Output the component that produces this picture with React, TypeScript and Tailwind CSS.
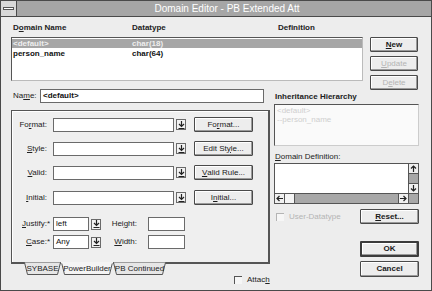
import React from "react";

const font = "font-['Liberation_Sans',Arial,sans-serif]";

function U({ children }: { children: React.ReactNode }) {
  return <span className="underline underline-offset-1">{children}</span>;
}

function Btn({
  children,
  className = "",
  disabled = false,
  isDefault = false,
}: {
  children: React.ReactNode;
  className?: string;
  disabled?: boolean;
  isDefault?: boolean;
}) {
  return (
    <div
      className={`h-[15px] flex items-center justify-center text-[8px] bg-[#ededed] rounded-[1px] ${
        isDefault ? "border-2 border-[#3c3c3c]" : "border border-[#4a4a4a]"
      } shadow-[inset_-1px_-1px_0_#9a9a9a,inset_1px_1px_0_#ffffff] ${
        disabled ? "text-[#b4b4b4]" : "text-[#1a1a1a]"
      } ${className}`}
    >
      {children}
    </div>
  );
}

function ArrowDown() {
  return (
    <svg width="7" height="8" viewBox="0 0 7 8">
      <path d="M3.5 0v4.5M1 3l2.5 2.5L6 3M0.5 7.5h6" stroke="#222" strokeWidth="1.2" fill="none" />
    </svg>
  );
}

function Combo({ width, value }: { width: string; value?: string }) {
  return (
    <div className={`flex items-center gap-[2px] ${width}`}>
      <div className="flex-1 h-[14px] bg-white border border-[#6a6a6a] text-[8px] leading-[12px] px-[2px] text-[#111]">
        {value}
      </div>
      <div className="w-[10px] h-[11px] bg-[#f2f2f2] border border-[#6a6a6a] flex items-center justify-center">
        <ArrowDown />
      </div>
    </div>
  );
}

function FieldRow({
  label,
  button,
}: {
  label: React.ReactNode;
  button: React.ReactNode;
}) {
  return (
    <div className="flex items-center h-[15px]">
      <div className="w-[29px] text-right text-[8px] text-[#222]">{label}</div>
      <div className="w-[6px]" />
      <Combo width="w-[133px]" />
      <Btn className="ml-[8px] w-[59px]">{button}</Btn>
    </div>
  );
}

function Tab({
  label,
  active = false,
  w,
}: {
  label: string;
  active?: boolean;
  w: number;
}) {
  return (
    <div className="relative h-[13px] flex items-center justify-center" style={{ width: w }}>
      <svg className="absolute inset-0" width={w} height={13} viewBox={`0 0 ${w} 13`}>
        <path
          d={`M0.5 0.5 L3.5 12.5 L${w - 3.5} 12.5 L${w - 0.5} 0.5`}
          fill={active ? "#f4f4f4" : "#e6e6e6"}
          stroke="#555"
          strokeWidth="1"
        />
        {active && <path d={`M0 0.5 H${w}`} stroke="#f4f4f4" strokeWidth="2" />}
      </svg>
      <span className="relative text-[8px] text-[#222] leading-none pt-[1px]">{label}</span>
    </div>
  );
}

function Checkbox({ label, disabled = false }: { label: React.ReactNode; disabled?: boolean }) {
  return (
    <div className={`flex items-center gap-[5px] text-[8px] ${disabled ? "text-[#b4b4b4]" : "text-[#222]"}`}>
      <div
        className={`w-[8px] h-[8px] bg-[#f6f6f6] border-l border-t ${
          disabled ? "border-[#b4b4b4]" : "border-[#555]"
        }`}
      />
      <span>{label}</span>
    </div>
  );
}

export default function App() {
  return (
    <div
      className={`${font} w-[432px] h-[291px] bg-[#ededed] border border-[#4a4a4a] flex flex-col overflow-hidden select-none`}
    >
      {/* title bar */}
      <div className="h-[16px] flex border-b border-[#4a4a4a]">
        <div className="w-[16px] bg-[#d8d8d8] border-r border-[#4a4a4a] flex items-center justify-center">
          <div className="w-[11px] h-[3px] bg-white border border-[#555]" />
        </div>
        <div className="flex-1 bg-[#a6a6a6] text-white text-[10px] flex items-center justify-center pl-[6px]">
          Domain Editor - PB Extended Att
        </div>
      </div>

      {/* domain list + actions */}
      <div className="flex pl-[10px] pt-[6px]">
        <div className="w-[352px]">
          <div className="grid grid-cols-[119px_146px_1fr] h-[10px] text-[8px] font-bold leading-[10px] text-[#222] pl-[2px]">
            <span>
              D<U>o</U>main Name
            </span>
            <span>Datatype</span>
            <span>Definition</span>
          </div>
          <div className="mt-[4px] h-[44px] bg-white border border-[#555] border-r-[#bbb] border-b-[#bbb] text-[8px] font-bold leading-[9px]">
            <div className="grid grid-cols-[119px_1fr] bg-[#a6a6a6] text-[#eeeeee] h-[9px] pl-[1px] mt-[1px]">
              <span>&lt;default&gt;</span>
              <span>char(18)</span>
            </div>
            <div className="grid grid-cols-[119px_1fr] text-[#111] h-[10px] pl-[1px] pt-[1px]">
              <span>person_name</span>
              <span>char(64)</span>
            </div>
          </div>
        </div>
        <div className="ml-[7px] pt-[14px] flex flex-col gap-[4px]">
          <Btn className="w-[48px] font-bold">
            <U>N</U>ew
          </Btn>
          <Btn className="w-[48px]" disabled>
            <U>U</U>pdate
          </Btn>
          <Btn className="w-[48px]" disabled>
            D<U>e</U>lete
          </Btn>
        </div>
      </div>

      {/* lower area */}
      <div className="flex flex-1 pl-[10px] -mt-[1px]">
        {/* left column */}
        <div className="w-[259px] flex flex-col">
          <div className="flex items-center h-[14px]">
            <span className="w-[29px] text-[8px] text-[#222] pl-[2px]">
              Na<U>m</U>e:
            </span>
            <div className="w-[224px] h-[14px] bg-white border border-[#6a6a6a] text-[8px] font-bold leading-[12px] px-[2px] text-[#111]">
              &lt;default&gt;
            </div>
          </div>

          <div className="mt-[7px] h-[154px] border border-[#555] border-r-2 border-b-2 bg-[#efefef] pl-[6px] pt-[6px] flex flex-col shadow-[inset_1px_1px_0_#ffffff]">
            <FieldRow
              label={
                <>
                  Fo<U>r</U>mat:
                </>
              }
              button={
                <>
                  Fo<U>r</U>mat...
                </>
              }
            />
            <div className="h-[9px]" />
            <FieldRow
              label={
                <>
                  <U>S</U>tyle:
                </>
              }
              button={
                <>
                  Edit St<U>y</U>le...
                </>
              }
            />
            <div className="h-[9px]" />
            <FieldRow
              label={
                <>
                  <U>V</U>alid:
                </>
              }
              button={
                <>
                  <U>V</U>alid Rule...
                </>
              }
            />
            <div className="h-[10px]" />
            <FieldRow
              label={
                <>
                  <U>I</U>nitial:
                </>
              }
              button={
                <>
                  I<U>n</U>itial...
                </>
              }
            />
            <div className="h-[12px]" />
            <div className="flex items-center h-[14px]">
              <div className="w-[32px] text-right text-[8px] text-[#222]">
                <U>J</U>ustify:*
              </div>
              <div className="w-[3px]" />
              <Combo width="w-[48px]" value="left" />
              <div className="w-[36px] text-right text-[8px] text-[#222]">
                Hei<U>g</U>ht:
              </div>
              <div className="ml-[11px] w-[37px] h-[14px] bg-white border border-[#6a6a6a]" />
            </div>
            <div className="h-[4px]" />
            <div className="flex items-center h-[14px]">
              <div className="w-[32px] text-right text-[8px] text-[#222]">
                <U>C</U>ase:*
              </div>
              <div className="w-[3px]" />
              <Combo width="w-[48px]" value="Any" />
              <div className="w-[36px] text-right text-[8px] text-[#222]">
                <U>W</U>idth:
              </div>
              <div className="ml-[11px] w-[37px] h-[14px] bg-white border border-[#6a6a6a]" />
            </div>
          </div>

          <div className="flex items-start -mt-[2px]">
            <div className="flex pl-[13px]">
              <Tab label="SYBASE" w={37} />
              <Tab label="PowerBuilder" w={52} active />
              <Tab label="PB Continued" w={53} />
            </div>
            <div className="ml-[68px] mt-[12px]">
              <Checkbox
                label={
                  <>
                    Attac<U>h</U>
                  </>
                }
              />
            </div>
          </div>
        </div>

        {/* right column */}
        <div className="ml-[4px] w-[145px] flex flex-col">
          <div className="text-[8px] font-bold text-[#222] h-[10px] leading-[10px] pl-[1px] mt-[3px]">
            Inheritance Hierarchy
          </div>
          <div className="mt-[2px] h-[42px] bg-[#fafafa] border border-[#555] border-r-[#ccc] border-b-[#ccc] text-[8px] leading-[9px] text-[#cfcfcf] pl-[2px] pt-[1px]">
            <div>&lt;default&gt;</div>
            <div>--person_name</div>
          </div>

          <div className="mt-[6px] text-[8px] text-[#222] h-[10px] leading-[10px] pl-[1px]">
            <U>D</U>omain Definition:
          </div>
          <div className="mt-[1px] h-[41px] bg-white border border-[#555] flex flex-col">
            <div className="flex flex-1">
              <div className="flex-1" />
              <div className="w-[10px] border-l border-[#555] flex flex-col">
                <div className="h-[10px] bg-[#f0f0f0] border-b border-[#555] flex items-center justify-center">
                  <svg width="7" height="7" viewBox="0 0 7 7">
                    <path d="M3.5 7V1M1 3.5L3.5 1L6 3.5" stroke="#222" strokeWidth="1.2" fill="none" />
                  </svg>
                </div>
                <div className="flex-1 bg-[#a8a8a8]" />
                <div className="h-[10px] bg-[#f0f0f0] border-t border-[#555] flex items-center justify-center">
                  <svg width="7" height="7" viewBox="0 0 7 7">
                    <path d="M3.5 0V6M1 3.5L3.5 6L6 3.5" stroke="#222" strokeWidth="1.2" fill="none" />
                  </svg>
                </div>
              </div>
            </div>
            <div className="h-[10px] border-t border-[#555] flex">
              <div className="w-[10px] bg-[#f0f0f0] border-r border-[#555] flex items-center justify-center">
                <svg width="7" height="7" viewBox="0 0 7 7">
                  <path d="M7 3.5H1M3.5 1L1 3.5L3.5 6" stroke="#222" strokeWidth="1.2" fill="none" />
                </svg>
              </div>
              <div className="w-[10px] bg-[#f4f4f4] border-r border-[#555]" />
              <div className="flex-1 bg-[#a8a8a8]" />
              <div className="w-[10px] bg-[#f0f0f0] border-l border-[#555] flex items-center justify-center">
                <svg width="7" height="7" viewBox="0 0 7 7">
                  <path d="M0 3.5H6M3.5 1L6 3.5L3.5 6" stroke="#222" strokeWidth="1.2" fill="none" />
                </svg>
              </div>
              <div className="w-[10px] bg-[#a8a8a8] border-l border-[#555]" />
            </div>
          </div>

          <div className="mt-[5px] flex items-center justify-between pl-[2px]">
            <Checkbox label="User-Datatype" disabled />
            <Btn className="w-[59px] font-bold">
              <U>R</U>eset...
            </Btn>
          </div>

          <div className="mt-[17px] flex justify-end">
            <Btn className="w-[59px] h-[16px] font-bold" isDefault>
              OK
            </Btn>
          </div>
          <div className="mt-[4px] flex justify-end">
            <Btn className="w-[59px] h-[16px] font-bold">Cancel</Btn>
          </div>
        </div>
      </div>
    </div>
  );
}
